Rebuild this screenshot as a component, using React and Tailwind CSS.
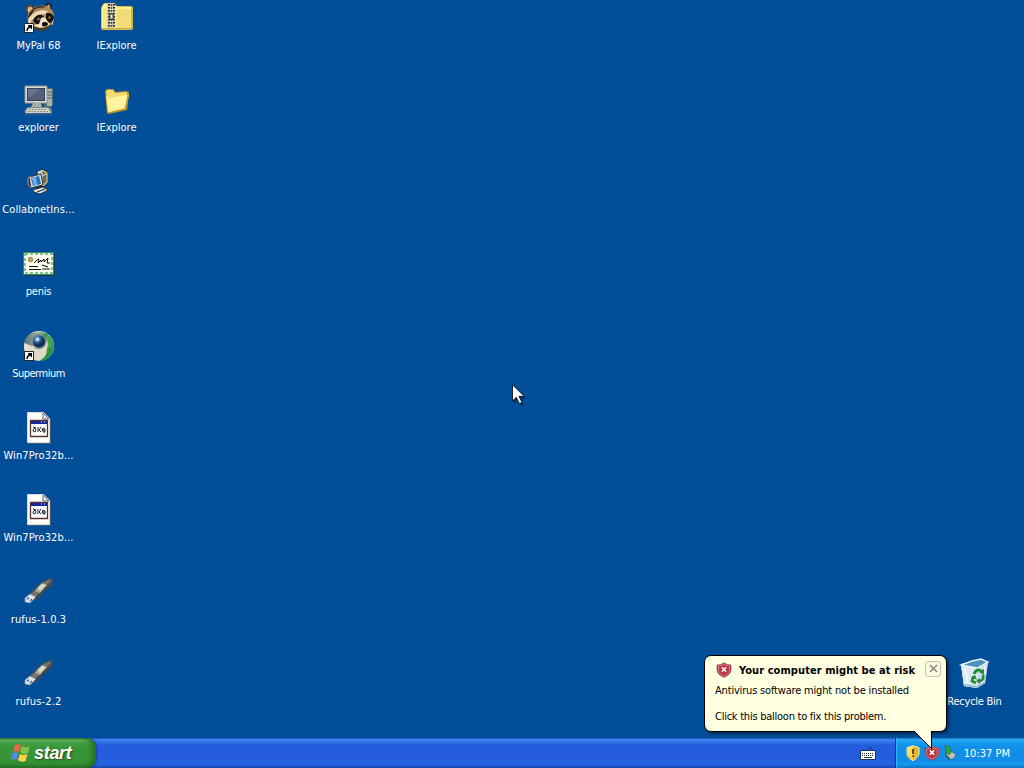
const UI_FONT = "font-['DejaVu_Sans_Condensed','DejaVu_Sans','Noto_Sans',sans-serif]";

const leftIcons = [
  { label: "MyPal 68", icon: RaccoonIcon, spacing: "tracking-[-0.05px]" },
  { label: "explorer", icon: ComputerIcon, spacing: "tracking-[-0.05px]" },
  { label: "CollabnetIns...", icon: InstallerIcon, spacing: "tracking-[0.12px]" },
  { label: "penis", icon: CertificateIcon, spacing: "tracking-[-0.2px]" },
  { label: "Supermium", icon: SupermiumIcon, spacing: "tracking-[-0.5px]" },
  { label: "Win7Pro32b...", icon: BatchFileIcon, spacing: "tracking-[0.1px]" },
  { label: "Win7Pro32b...", icon: BatchFileIcon, spacing: "tracking-[0.1px]" },
  { label: "rufus-1.0.3", icon: UsbIcon, spacing: "tracking-[0.15px]" },
  { label: "rufus-2.2", icon: UsbIcon, spacing: "tracking-[0.15px]" },
];

const secondIcons = [
  { label: "IExplore", icon: ZipFolderIcon, spacing: "tracking-[0px]" },
  { label: "IExplore", icon: FolderIcon, spacing: "tracking-[0px]" },
];

export default function App() {
  return (
    <div
      className={`relative flex h-[768px] w-[1024px] cursor-default flex-col overflow-hidden bg-[#004e98] text-[11px] leading-[13px] ${UI_FONT}`}
    >
      <main className="flex flex-1 justify-between">
        <div className="flex gap-px">
          <IconColumn items={leftIcons} />
          <IconColumn items={secondIcons} />
        </div>

        <div className="flex flex-col justify-end pr-[11px]">
          <DesktopIcon label="Recycle Bin" icon={RecycleBinIcon} spacing="tracking-[-0.25px]" />
        </div>
      </main>

      <Taskbar />
      <Balloon />
      <Cursor />
    </div>
  );
}

function IconColumn({ items }) {
  return (
    <div className="flex flex-col">
      {items.map((item, index) => (
        <DesktopIcon key={index} {...item} />
      ))}
    </div>
  );
}

function DesktopIcon({ label, icon: Icon, spacing }) {
  return (
    <div className="flex h-[82px] w-[77px] flex-col items-center pt-[2px]">
      <Icon />
      <span className={`mt-[5px] whitespace-nowrap text-white ${spacing}`}>{label}</span>
    </div>
  );
}

function Taskbar() {
  return (
    <footer className="flex h-[30px] bg-[linear-gradient(to_bottom,#1f4fc0_0%,#4289f2_6%,#3471e8_13%,#245edc_25%,#245cdb_60%,#2663e0_85%,#2158d4_93%,#1941a5_100%)]">
      <button
        type="button"
        className="flex h-[30px] w-[96px] items-center rounded-r-[9px] bg-[linear-gradient(to_bottom,#2f7a2f_0%,#6db46c_8%,#45a045_16%,#389638_32%,#369436_75%,#308a30_90%,#256d25_100%)] pl-[10px] shadow-[inset_-4px_0_5px_#246f24,1px_0_2px_#173f9a]"
      >
        <WindowsFlag />
        <span className="ml-[3px] font-['Liberation_Sans',sans-serif] text-[18px] leading-none font-bold tracking-[-0.3px] text-white italic [text-shadow:1px_1px_2px_#1c4a1c]">
          start
        </span>
      </button>

      <div className="flex flex-1 items-center justify-end pr-[19px] pt-px">
        <KeyboardIcon />
      </div>

      <div className="flex w-[129px] items-center border-l border-[#0d3591] bg-[linear-gradient(to_bottom,#1575ca_0%,#2cb0f5_7%,#18a0ee_13%,#1290e8_28%,#118ce7_75%,#119aee_88%,#0e6cbd_100%)] pl-[9px] shadow-[inset_1px_0_1px_#35bbf8]">
        <YellowShield />
        <RedShield className="ml-[3px] h-4 w-4" />
        <SafelyRemoveIcon />
        <span className="mr-[14px] ml-auto whitespace-nowrap text-white">10:37 PM</span>
      </div>
    </footer>
  );
}

function Balloon() {
  return (
    <section className="absolute top-[655px] left-[704px] h-[77px] w-[243px] rounded-[7px] border border-black bg-[#ffffe1] text-black shadow-[2px_2px_3px_rgba(0,0,0,0.45)]">
      <div className="flex h-[25px] items-center pt-[3px] pl-[11px]">
        <RedShield className="h-4 w-4" />
        <h2 className="ml-[7px] font-bold tracking-[0.07px] whitespace-nowrap">
          Your computer might be at risk
        </h2>
        <button
          type="button"
          className="mr-[5px] mb-[3px] ml-auto flex h-[16px] w-[16px] items-center justify-center rounded-[3px] border border-[#c3c3b2] bg-[#f9f9e2]"
        >
          <svg width="9" height="9" viewBox="0 0 9 9" stroke="#85857a" strokeWidth="1.5">
            <path d="M1 1l7 7M8 1L1 8" />
          </svg>
        </button>
      </div>
      <p className="mt-[3px] ml-[10px] tracking-[-0.18px] whitespace-nowrap">
        Antivirus software might not be installed
      </p>
      <p className="mt-[13px] ml-[10px] tracking-[-0.25px] whitespace-nowrap">
        Click this balloon to fix this problem.
      </p>

      <svg className="absolute top-[74px] left-[206px]" width="23" height="20" viewBox="0 0 23 20">
        <path d="M2 0L20.5 19V0Z" fill="#ffffe1" />
        <path d="M3 1L20.5 18.5V1" fill="none" stroke="#000" />
        <path d="M2 0H22V1H2Z" fill="#ffffe1" />
      </svg>
    </section>
  );
}

function Cursor() {
  return (
    <svg className="absolute top-[384px] left-[512px]" width="14" height="23" viewBox="0 0 14 23">
      <path d="M2 3v17l4-4 3 6 3-1-3-6h5z" fill="#000" opacity=".3" />
      <path d="M.5.8V17l3.8-3.7 3 6.3 2.7-1.1-3-6.2h5.2z" fill="#fff" stroke="#000" strokeWidth=".8" />
    </svg>
  );
}

function ShortcutArrow() {
  return (
    <g>
      <path d="M1.5 21.5h9v9h-9z" fill="#fff" stroke="#222" />
      <path d="M4 29c0-2 .6-3 3-4.5" fill="none" stroke="#000" strokeWidth="1.5" />
      <path d="M4.5 23H9v4.5z" fill="#000" />
    </g>
  );
}

function RaccoonIcon() {
  return (
    <svg width="32" height="32" viewBox="0 0 32 32">
      <path d="M3 8c-1-4 3-6 6-5l3 4-6 6z" fill="#5d4027" />
      <path d="M4.5 8c0-3 2-4 4-3l1 2-4 4z" fill="#d8b98f" />
      <path d="M22 5c0-3 2-5 4-4 3 0 4 4 2 8z" fill="#2b1d18" />
      <path d="M24 5c0-2 1-3 2.5-2 1 1 1 3 0 4z" fill="#bb9878" />
      <path d="M5 12C8 5 16 2 23 4c6 2 9 7 8 13-1 6-6 10-13 10C9 28 3 20 5 12z" fill="#b58b55" />
      <path d="M8 9c4-5 10-6 14-4l-6 4-5 6-6 2c0-3 1-6 3-8z" fill="#3b291e" />
      <path d="M11 8c3-2 6-3 10-2l-7 5-6 3z" fill="#ad8455" />
      <path d="M5 17c4-6 9-8 14-9l5 1 5 5-6-2-8 1-6 5-3 4z" fill="#eed9b5" />
      <path d="M10 19c1-4 5-7 9-6 2 1 3 3 2 6l-4 4-4-1z" fill="#171312" />
      <path d="M23 11c3-1 7 1 8 4l-1 5-4 1-3-4z" fill="#16120f" />
      <path d="M18 16c3-2 5 0 6 3l3 3c-1 3-6 5-11 4l-6-3 6-1z" fill="#f2e2c4" />
      <circle cx="15.5" cy="17" r="1.5" fill="#9b5b28" />
      <circle cx="26.5" cy="15.5" r="1.2" fill="#b26c31" />
      <path d="M19 21c2-2 6-1 6 1s-5 4-6 1z" fill="#060708" />
      <path d="M10 24c7 3 13 2 18-2-2 4-5 7-10 7-3 0-6-2-8-5z" fill="#503820" />
      <path d="M6 18l-1 4 3-2M29 20l2-3-2 7z" fill="#ffe9c4" />
      <ShortcutArrow />
    </svg>
  );
}

function ZipFolderIcon() {
  return (
    <svg width="32" height="32" viewBox="0 0 32 32">
      <path d="M1 4l2-3h10l3 3h14c1 0 2 1 2 2v20c0 1-1 2-2 2H1l-1-2V6z" fill="#d8bd51" />
      <path d="M1 5l2-3h10l3 3h14v21H1z" fill="#fff18f" />
      <path d="M2 7h28v19H2z" fill="#f9e889" />
      <path d="M16 7h14v19H16z" fill="#f1dc79" />
      <path d="M6 1h8v26H6z" fill="#d4d0b5" />
      <path d="M8 2v24M13 2v24" stroke="#272626" strokeWidth="2" strokeDasharray="1.5 1.5" />
      <path d="M10.5 2v24" stroke="#55534d" strokeWidth="1.5" strokeDasharray="2 1" />
      <path d="M8 11h5v7H8z" fill="#4d4a43" />
      <path d="M9.5 12.5h2v4h-2z" fill="#eee" />
      <path d="M1 26.5h30V7" fill="none" stroke="#c7ad48" />
    </svg>
  );
}

function FolderIcon() {
  return (
    <svg width="32" height="32" viewBox="0 0 32 32">
      <path d="M4 7l2-2h6l3 3 10-1 3 1v3l-2 15-18 4-2-1z" fill="#b79428" />
      <path d="M5 7l2-1h5l2 3 12-1-1 17-17 3z" fill="#f5db70" />
      <path d="M5 12l2 17 17-4 4-14-14 2-2 1z" fill="#ffe98b" />
      <path d="M7 14l19-3-3 12-14 3z" fill="#fff4a8" opacity=".75" />
      <path d="M7 29l17-4 3-13" fill="none" stroke="#b28d27" />
    </svg>
  );
}

function ComputerIcon() {
  return (
    <svg width="32" height="32" viewBox="0 0 32 32">
      <path d="M22 4h8v17l-2 2h-7z" fill="#59686f" />
      <path d="M24 5h5v17h-5z" fill="#a7b3b0" />
      <path d="M24 8h5M24 11h5M24 14h5" stroke="#55645f" />
      <path d="M2 2h22v17H2z" fill="#d8d8ce" stroke="#8c9697" />
      <path d="M4 4h18v13H4z" fill="#34405e" />
      <path d="M5 5h16v11H5z" fill="#565f7e" />
      <path d="M5 5h12L7 13H5z" fill="#7e8496" opacity=".55" />
      <path d="M10 19h8l1 4H8z" fill="#a4ada9" />
      <path d="M5 23h21l3 2v4H4l-3-2z" fill="#78868c" />
      <path d="M5 24h20l3 5H2z" fill="#d0d1c8" />
      <path d="M6 25.5h18M5 27.5h20" stroke="#8b8e85" strokeDasharray="2 1" />
      <path d="M2 30h27" stroke="#676f72" />
    </svg>
  );
}

function InstallerIcon() {
  return (
    <svg width="32" height="32" viewBox="0 0 32 32">
      <path d="M14 6l5-3 5 3v10l-5 4-5-3z" fill="#bec8c4" stroke="#27292c" />
      <path d="M18 6l5-1v11l-5 3z" fill="#566b70" />
      <path d="M15 5l4 2v3l4-2M19 7v12" fill="none" stroke="#e3e5d9" />
      <path d="M6 11l12-3 2 11-12 3z" fill="#d0ddd9" stroke="#303738" />
      <path d="M8 12l8-2 2 8-8 2z" fill="#286fc1" />
      <path d="M9 12l4-1 1 8-3 1z" fill="#6eb4e4" />
      <path d="M20 5l4 2v9l-4 4" fill="none" stroke="#f8c25c" strokeWidth="1.2" />
      <path d="M8 10l-3 2v6l3 4" fill="none" stroke="#d9805a" strokeWidth="1" />
      <path d="M15 20h6l2 4-7 2-5-2z" fill="#252a30" />
      <path d="M10 24l10-3 5 3-8 4-6-2z" fill="#e6e8dc" stroke="#24282d" strokeWidth=".8" />
      <path d="M14 26l8-3" stroke="#1f2632" strokeWidth="1.2" />
    </svg>
  );
}

function CertificateIcon() {
  return (
    <svg width="32" height="32" viewBox="0 0 32 32">
      <path d="M2 6h30v22H2z" fill="#20332c" opacity=".7" />
      <path d="M.5 4.5h30v22H.5z" fill="#fffdf0" stroke="#398650" />
      <path d="M2 6h27v19H2z" fill="#fffdf0" stroke="#53b77b" strokeWidth="1.6" strokeDasharray="3 2" />
      <circle cx="7.5" cy="11.5" r="2.7" fill="#a68d58" />
      <circle cx="7.5" cy="11.5" r="1.2" fill="#d5b36d" />
      <path d="M11 15l3-3 2-1-1 4 3-3v2l3-3v3l4-4-1 5h3" fill="none" stroke="#111" strokeWidth="1" />
      <path d="M6 18.5h9M6 21.5h12M19 17l6 2M19 21h8" stroke="#151515" strokeWidth="1.1" />
    </svg>
  );
}

function SupermiumIcon() {
  return (
    <svg width="32" height="32" viewBox="0 0 32 32">
      <defs>
        <radialGradient id="supermium-core" cx="35%" cy="28%">
          <stop stopColor="#b7d8eb" />
          <stop offset=".4" stopColor="#487daf" />
          <stop offset="1" stopColor="#122d57" />
        </radialGradient>
        <linearGradient id="supermium-top" x2="1">
          <stop stopColor="#526b68" />
          <stop offset=".6" stopColor="#a7b7a5" />
          <stop offset="1" stopColor="#218537" />
        </linearGradient>
      </defs>
      <circle cx="16" cy="16" r="15" fill="#e0d9c4" />
      <path d="M1 13C3 2 15-1 25 4l-5 12H9z" fill="url(#supermium-top)" />
      <path d="M23 4c7 3 10 12 6 19-3 6-8 8-13 8 6-3 8-7 8-12 2-4 2-9-3-13z" fill="#299443" />
      <path d="M24 5c4 3 6 8 5 12l-5 2c1-5 1-8-2-11z" fill="#58ae4a" opacity=".7" />
      <path d="M2 13c5 3 4 7 8 9l-2 7C2 26 0 19 2 13z" fill="#f0ddd0" />
      <circle cx="16" cy="11.5" r="7.5" fill="#6b8996" />
      <circle cx="16" cy="11.5" r="6" fill="url(#supermium-core)" />
      <circle cx="14.5" cy="9.5" r="1.8" fill="#c1deec" />
      <ShortcutArrow />
    </svg>
  );
}

function BatchFileIcon() {
  return (
    <svg width="32" height="32" viewBox="0 0 32 32">
      <path d="M5 1h17l6 6v25H5z" fill="#435c78" />
      <path d="M4.5.5h16l6 6v24h-22z" fill="#fffffb" stroke="#d7dce0" />
      <path d="M20 1v6h6z" fill="#eef0ed" stroke="#586979" />
      <path d="M7.5 8.5h17v16h-17z" fill="#fff" stroke="#58332e" strokeWidth="1.3" />
      <path d="M8 9h16v3H8z" fill="#162599" />
      <path d="M18 10h1m2 0h1" stroke="#fff" />
      <g fill="none" stroke="#1a2330" strokeWidth="1">
        <path d="M10 18l2-2 1 2-1 2-2-1zM15 15v5M18 15l-2 3 2 2M20 16l2 1v3h-2v-2h2M10 15l3 1M19 19l1-3" />
      </g>
    </svg>
  );
}

function UsbIcon() {
  return (
    <svg width="32" height="32" viewBox="0 0 32 32">
      <path d="M6 18L20 5l8-3 2 3-2 5L12 25z" fill="#4c5150" />
      <path d="M8 18L21 6l7-3-2 4-14 14z" fill="#737370" />
      <path d="M14 12l5-5 5 2-7 8-5-2z" fill="#a9aaa0" />
      <path d="M15 12l4-4 4 1-6 6z" fill="#e0ddc7" />
      <path d="M2 22l5-4 6 3-6 6-5-1z" fill="#dbe5ec" stroke="#8291a0" strokeWidth=".8" />
      <path d="M4 23l2-1M7 25l2-2" stroke="#45678d" strokeWidth="1.5" />
      <path d="M12 23L28 9" stroke="#35434a" strokeWidth="1.5" />
    </svg>
  );
}

function RecycleBinIcon() {
  return (
    <svg width="32" height="32" viewBox="0 0 32 32">
      <path d="M2 6l20-5 7 3-3 21-8 5-13-2z" fill="#a8cce2" />
      <path d="M2 7l16 3 11-6-3 21-8 5-13-2z" fill="#cbe0ec" />
      <path d="M2 7l16 3v20L5 28z" fill="#e1ecf1" opacity=".85" />
      <path d="M2 7L13 3l9-2 7 3-11 6z" fill="#4b91bd" stroke="#e9f1ef" strokeWidth="1.4" />
      <path d="M6 10l3 16M26 8l-3 18" stroke="#fff" strokeWidth="1.4" opacity=".7" />
      <path d="M6 27l12 2 7-4" fill="none" stroke="#93b9d2" strokeWidth="2" />
      <g fill="none" stroke="#228b35" strokeWidth="2.8">
        <path d="M15 16c2-5 6-5 8-2M24 17c1 4-1 6-4 6M17 25l-4-2 1-4" />
      </g>
      <path d="M20 14l5-3v6zM21 20v6l-4-3zM12 19l4-2 2 5z" fill="#228b35" />
    </svg>
  );
}

function WindowsFlag() {
  return (
    <svg width="21" height="20" viewBox="0 0 21 20">
      <path d="M5 2c2-1.5 4-1 6 0L9 9C7 8 5 7.5 3 9z" fill="#ee6741" />
      <path d="M12 3c2 1 4 2 8 0l-2 7c-3 1.5-6 1-8-1z" fill="#82c34a" />
      <path d="M2.5 10c2-1 4-1 6 0l-2 7c-2-1.5-4-1-6 0z" fill="#548ce7" />
      <path d="M10 11c2 1 4 1.5 7.5 0l-2 7c-3 1-5 1-7.5-1z" fill="#ffd348" />
    </svg>
  );
}

function KeyboardIcon() {
  return (
    <svg width="16" height="16" viewBox="0 0 16 16">
      <path d="M8 5V3l2-1h2" fill="none" stroke="#162d72" />
      <path d="M.5 4.5h15v9H.5z" fill="#fff" stroke="#182f72" />
      <path d="M2 7.5h12M2 9.5h12" stroke="#202a3c" strokeDasharray="1 1" />
      <path d="M4 11.5h8" stroke="#303744" />
    </svg>
  );
}

function YellowShield() {
  return (
    <svg width="16" height="16" viewBox="0 0 16 16">
      <path d="M8 .7l6 2v5c0 4-3 6-6 8-4-2-6-4-6-8v-5z" fill="#efbc24" stroke="#f8ebc0" />
      <path d="M8 2v12c3-2 5-4 5-7V3z" fill="#e3b32a" />
      <path d="M3 3l5-2v13C5 12 3 10 3 7z" fill="#ffe15c" />
      <path d="M8 4v5M8 10.5V12" stroke="#3e3518" strokeWidth="1.6" />
    </svg>
  );
}

function RedShield({ className }) {
  return (
    <svg className={className} viewBox="0 0 16 16">
      <path d="M1 3l4-.5L8 .7l3 1.8 4 .5v4.5c0 4-3 6-7 8-4-2-7-4-7-8z" fill="#a92836" stroke="#7f6269" strokeWidth=".7" />
      <path d="M2.5 4L6 3.3 8 2l2 1.3 3.5.7v4c0 3-2 4.5-5.5 6.3C4.500 12.500 2.500 11 2.500 8z" fill="#bd3140" stroke="#d99b9e" strokeWidth=".8" />
      <path d="M5.8 5.3l4.400 4.400m0-4.400l-4.400 4.400" stroke="#fff" strokeWidth="1.6" />
    </svg>
  );
}

function SafelyRemoveIcon() {
  return (
    <svg className="ml-[2px]" width="16" height="16" viewBox="0 0 16 16">
      <path d="M3 8l7-2 4 4v2l-7 3-4-4z" fill="#48575e" />
      <path d="M4 9l6-2 4 3-6 3z" fill="#bcc5be" />
      <path d="M8 13.500l5-2" stroke="#eceee5" />
      <path d="M2 1l6 1v3l2 1-3 4-4-4 2-1z" fill="#35a340" stroke="#237331" strokeWidth=".7" />
    </svg>
  );
}
